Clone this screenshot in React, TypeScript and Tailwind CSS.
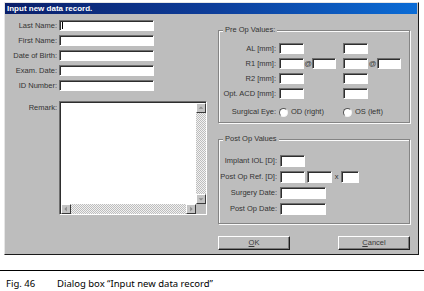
import type { ReactNode } from 'react';

const inputCls =
  'bg-white border border-t-[#6e6e6e] border-l-[#6e6e6e] border-b-white border-r-white shadow-[inset_1px_1px_0_#2e2e2e]';

function Field({ w, h = 11, caret }: { w: string; h?: number; caret?: boolean }) {
  return (
    <div className={`${inputCls} ${w} ${h === 12 ? 'h-[12px]' : 'h-[11px]'} relative`}>
      {caret && <div className="absolute left-[2px] top-[1px] w-px h-[7px] bg-black" />}
    </div>
  );
}

function LeftRow({ label, caret }: { label: string; caret?: boolean }) {
  return (
    <div className="flex items-center h-[11px]">
      <div className="w-[53px] mr-[1px] text-right pr-[1px] whitespace-nowrap">{label}</div>
      <Field w="w-[95px]" caret={caret} />
    </div>
  );
}

function Group({ title, className, children }: { title: string; className: string; children: ReactNode }) {
  return (
    <div className={`relative border border-[#848484] shadow-[inset_1px_1px_0_#fafafa,1px_1px_0_#fafafa] ${className}`}>
      <div className="absolute -top-[6px] left-[4px] bg-[#bdbdbd] px-[2px] leading-[10px]">{title}</div>
      {children}
    </div>
  );
}

function Label({ children, w = 'w-[57px]' }: { children: ReactNode; w?: string }) {
  return <div className={`${w} mr-[3px] text-right whitespace-nowrap`}>{children}</div>;
}

function ArrowBtn({ dir }: { dir: 'up' | 'down' | 'left' | 'right' }) {
  const pts = {
    up: '2,6 5,3 8,6',
    down: '2,4 5,7 8,4',
    left: '6,2 3,5 6,8',
    right: '4,2 7,5 4,8',
  }[dir];
  return (
    <div className="w-[10px] h-[10px] bg-[#c4c4c4] border border-t-white border-l-white border-b-[#3a3a3a] border-r-[#3a3a3a] flex items-center justify-center shrink-0">
      <svg width="8" height="8" viewBox="0 0 10 10">
        <polygon points={pts} fill="#8a8a8a" />
      </svg>
    </div>
  );
}

function Radio({ label }: { label: string }) {
  return (
    <div className="flex items-center gap-[3px]">
      <div className="w-[9px] h-[9px] rounded-full bg-white border border-t-[#555] border-l-[#555] border-b-[#f4f4f4] border-r-[#f4f4f4]" />
      <span className="whitespace-nowrap">{label}</span>
    </div>
  );
}

function Button({ first, rest }: { first: string; rest: string }) {
  return (
    <div className="w-[72px] h-[14px] bg-[#bdbdbd] border border-t-white border-l-white border-b-[#1e1e1e] border-r-[#1e1e1e] shadow-[inset_-1px_-1px_0_#7a7a7a] flex items-center justify-center text-[#3a3a3a]">
      <span>
        <span className="underline">{first}</span>
        {rest}
      </span>
    </div>
  );
}

export default function App() {
  return (
    <div className="w-[424px] h-[291px] bg-white overflow-hidden font-['Liberation_Sans',Arial,sans-serif]">
      {/* Dialog window */}
      <div className="ml-[4px] mt-[2px] w-[415px] h-[253px] bg-[#bdbdbd] border border-t-[#e6e6e6] border-l-[#e6e6e6] border-b-[#1a1a1a] border-r-[#1a1a1a] text-[7.5px] text-[#333333] leading-none">
        <div className="h-[11px] mr-[1px] bg-gradient-to-r from-[#0a1f6a] via-[#0d3d99] to-[#0a6cd6] flex items-center pl-[2px]">
          <span className="text-white font-bold text-[8px] leading-none">Input new data record.</span>
        </div>

        <div className="flex pt-[6px]">
          {/* Left column */}
          <div className="w-[202px] flex flex-col">
            <div className="flex flex-col gap-[4px]">
              <LeftRow label="Last Name:" caret />
              <LeftRow label="First Name:" />
              <LeftRow label="Date of Birth:" />
              <LeftRow label="Exam. Date:" />
              <LeftRow label="ID Number:" />
            </div>
            <div className="flex mt-[10px]">
              <div className="w-[53px] mr-[1px] text-right pr-[1px] pt-[3px]">Remark:</div>
              <div className={`${inputCls} w-[148px] h-[114px] flex flex-col`}>
                <div className="flex-1 flex">
                  <div className="flex-1" />
                  <div className="w-[10px] flex flex-col ml-[1px] mt-[1px]">
                    <ArrowBtn dir="up" />
                    <div className="flex-1 bg-[repeating-conic-gradient(#bdbdbd_0%_25%,#f2f2f2_0%_50%)] bg-size-[2px_2px]" />
                    <ArrowBtn dir="down" />
                  </div>
                </div>
                <div className="flex h-[10px] ml-[1px]">
                  <ArrowBtn dir="left" />
                  <div className="flex-1 bg-[repeating-conic-gradient(#bdbdbd_0%_25%,#f2f2f2_0%_50%)] bg-size-[2px_2px]" />
                  <ArrowBtn dir="right" />
                  <div className="w-[10px] bg-[#bdbdbd]" />
                </div>
              </div>
            </div>
          </div>

          {/* Right column */}
          <div className="ml-[11px] w-[192px] flex flex-col">
            <Group title="Pre Op Values:" className="mt-[10px] h-[93px] pt-[12px]">
              <div className="flex flex-col gap-[4px]">
                <div className="flex items-center h-[11px]">
                  <Label>AL [mm]:</Label>
                  <div className="w-[64px]"><Field w="w-[25px]" /></div>
                  <Field w="w-[25px]" />
                </div>
                <div className="flex items-center h-[11px]">
                  <Label>R1 [mm]:</Label>
                  <div className="w-[64px] flex items-center">
                    <Field w="w-[25px]" />
                    <span className="w-[8px] text-center">@</span>
                    <Field w="w-[24px]" />
                  </div>
                  <Field w="w-[25px]" />
                  <span className="w-[9px] text-center">@</span>
                  <Field w="w-[24px]" />
                </div>
                <div className="flex items-center h-[11px]">
                  <Label>R2 [mm]:</Label>
                  <div className="w-[64px]"><Field w="w-[25px]" /></div>
                  <Field w="w-[25px]" />
                </div>
                <div className="flex items-center h-[11px]">
                  <Label>Opt. ACD [mm]:</Label>
                  <div className="w-[64px]"><Field w="w-[25px]" /></div>
                  <Field w="w-[25px]" />
                </div>
              </div>
              <div className="flex items-center h-[10px] mt-[8px]">
                <Label>Surgical Eye:</Label>
                <div className="w-[64px]"><Radio label="OD (right)" /></div>
                <Radio label="OS (left)" />
              </div>
            </Group>

            <Group title="Post Op Values" className="mt-[16px] h-[85px] pt-[15px]">
              <div className="flex flex-col gap-[4px]">
                <div className="flex items-center h-[12px]">
                  <Label w="w-[58px]">Implant IOL [D]:</Label>
                  <Field w="w-[25px]" h={12} />
                </div>
                <div className="flex items-center h-[12px]">
                  <Label w="w-[58px]">Post Op Ref. [D]:</Label>
                  <Field w="w-[25px]" h={12} />
                  <div className="w-[2px]" />
                  <Field w="w-[25px]" h={12} />
                  <span className="w-[9px] text-center">x</span>
                  <Field w="w-[18px]" h={12} />
                </div>
                <div className="flex items-center h-[12px]">
                  <Label w="w-[58px]">Surgery Date:</Label>
                  <Field w="w-[46px]" h={12} />
                </div>
                <div className="flex items-center h-[12px]">
                  <Label w="w-[58px]">Post Op Date:</Label>
                  <Field w="w-[46px]" h={12} />
                </div>
              </div>
            </Group>

            <div className="flex justify-between mt-[12px]">
              <Button first="O" rest="K" />
              <Button first="C" rest="ancel" />
            </div>
          </div>
        </div>
      </div>

      {/* Caption */}
      <div className="mt-[15px] h-px bg-black" />
      <div className="flex pl-[6px] pt-[8px] text-[9.5px] leading-none text-black font-['Noto_Sans',sans-serif]">
        <span className="w-[51px]">Fig. 46</span>
        <span>Dialog box “Input new data record”</span>
      </div>
    </div>
  );
}
